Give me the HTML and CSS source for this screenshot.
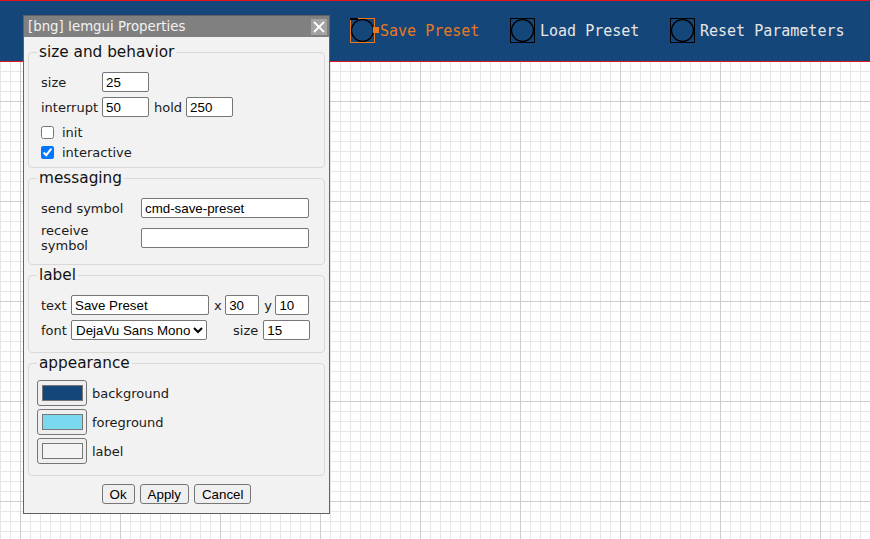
FILE: index.html
```html
<!DOCTYPE html>
<html>
<head>
<meta charset="utf-8">
<title>Iemgui Properties</title>
<link rel="stylesheet" href="styles.css">
</head>
<body>
<header class="bar">
  <div class="bng selected">
    <span class="box"><svg class="ring" width="23" height="23" viewBox="0 0 23 23"><circle cx="11.5" cy="11.5" r="11" fill="none" stroke="#000" stroke-width="1.3"/></svg></span>
    <span class="lbl">Save Preset</span>
  </div>
  <div class="bng">
    <span class="box"><svg class="ring" width="23" height="23" viewBox="0 0 23 23"><circle cx="11.5" cy="11.5" r="11" fill="none" stroke="#000" stroke-width="1.3"/></svg></span>
    <span class="lbl">Load Preset</span>
  </div>
  <div class="bng">
    <span class="box"><svg class="ring" width="23" height="23" viewBox="0 0 23 23"><circle cx="11.5" cy="11.5" r="11" fill="none" stroke="#000" stroke-width="1.3"/></svg></span>
    <span class="lbl">Reset Parameters</span>
  </div>
</header>

<div class="dialog">
  <div class="titlebar">
    <span class="title">[bng] Iemgui Properties</span>
    <span class="close"><svg width="16" height="16" viewBox="0 0 16 16"><path d="M3 3 L13 13 M13 3 L3 13" stroke="#fff" stroke-width="1.8" fill="none"/></svg></span>
  </div>
  <div class="body">
    <fieldset class="fs fs1">
      <legend>size and behavior</legend>
      <div class="row"><span class="lab w61">size</span><input class="in w47" type="text" value="25"></div>
      <div class="row"><span class="lab w61">interrupt</span><input class="in w47" type="text" value="50"><span class="lab hold">hold</span><input class="in w47" type="text" value="250"></div>
      <label class="chk"><input type="checkbox"><span>init</span></label>
      <label class="chk"><input type="checkbox" checked><span>interactive</span></label>
    </fieldset>

    <fieldset class="fs fs2">
      <legend>messaging</legend>
      <div class="row"><span class="lab w100">send symbol</span><input class="in w168" type="text" value="cmd-save-preset"></div>
      <div class="row tall"><span class="lab w100 two">receive<br>symbol</span><input class="in w168" type="text" value=""></div>
    </fieldset>

    <fieldset class="fs fs3">
      <legend>label</legend>
      <div class="row"><span class="lab w30">text</span><input class="in w138" type="text" value="Save Preset"><span class="lab xy">x</span><input class="in w34" type="text" value="30"><span class="lab xy">y</span><input class="in w34" type="text" value="10"></div>
      <div class="row"><span class="lab w30">font</span><select class="sel"><option>DejaVu Sans Mono</option></select><span class="lab fsize">size</span><input class="in w47" type="text" value="15"></div>
    </fieldset>

    <fieldset class="fs fs4">
      <legend>appearance</legend>
      <div class="crow"><button class="cbtn" type="button"><span class="sw sw-bg"></span></button><span class="lab">background</span></div>
      <div class="crow"><button class="cbtn" type="button"><span class="sw sw-fg"></span></button><span class="lab">foreground</span></div>
      <div class="crow"><button class="cbtn" type="button"><span class="sw sw-lb"></span></button><span class="lab">label</span></div>
    </fieldset>

    <div class="actions">
      <button class="btn" type="button">Ok</button>
      <button class="btn" type="button">Apply</button>
      <button class="btn" type="button">Cancel</button>
    </div>
  </div>
</div>
</body>
</html>
```

FILE: styles.css
```css
* { box-sizing: border-box; }
html, body { margin: 0; height: 100%; }
body {
  position: relative;
  overflow: hidden;
  font-family: "DejaVu Sans", sans-serif;
  background-color: #fff;
  background-image:
    linear-gradient(to right, #cdcdcd 1px, transparent 1px),
    linear-gradient(to bottom, #cdcdcd 1px, transparent 1px),
    linear-gradient(to right, #e6e6e6 1px, transparent 1px),
    linear-gradient(to bottom, #e6e6e6 1px, transparent 1px);
  background-size: 100px 100px, 100px 100px, 10px 10px, 10px 10px;
  background-position: 20px 0, 0 1px, 0 0, 0 1px;
}

/* header bar with bang objects */
.bar {
  height: 62px;
  background: #154679;
  border-top: 1px solid #e3141c;
  border-bottom: 1px solid #e3141c;
  display: flex;
  padding: 17px 0 0 350px;
}
.bng {
  flex: 0 0 160px;
  display: flex;
  align-items: center;
  height: 25px;
}
.box {
  position: relative;
  width: 25px;
  height: 25px;
  border: 1px solid #000;
  flex: 0 0 auto;
}
.ring { display: block; }
.lbl {
  font-family: "DejaVu Sans Mono", monospace;
  font-size: 15px;
  color: #e6e6e6;
  margin-left: 5px;
  white-space: nowrap;
}
.selected .box { border-color: #e8791f; }
.selected .lbl { color: #e8791f; }
.selected .box::before {
  content: "";
  position: absolute;
  left: -1px;
  top: -1px;
  width: 8px;
  height: 2px;
  background: #000;
}
.selected .box::after {
  content: "";
  position: absolute;
  left: 22px;
  top: 8px;
  width: 6px;
  height: 6px;
  background: #e8791f;
}

/* dialog */
.dialog {
  position: absolute;
  left: 23px;
  top: 15px;
  width: 307px;
  height: 499px;
  border: 1px solid #626262;
  background: #f2f2f2;
  color: #1a1a1a;
}
.titlebar {
  height: 21px;
  background: #808080;
  color: #f2f2f2;
  font-size: 13.33px;
  display: flex;
  align-items: center;
  justify-content: space-between;
  padding: 0 2px 0 4px;
}
.close {
  width: 16px;
  height: 16px;
  background: #a3a3a3;
  display: block;
}
.close svg { display: block; }
.body { padding: 6px 4px 0; }

.fs {
  border: 1px solid #d9d9d9;
  border-radius: 4px;
  margin: 0;
  min-width: 0;
  padding: 11px 11px 5px 12px;
}
.fs + .fs { margin-top: 1px; }
.fs legend {
  font-size: 15.3px;
  line-height: 18px;
  padding: 0 2px;
  margin-left: -4px;
  color: #111;
}
.fs2 { padding-bottom: 11px; }
.fs3 { padding-bottom: 12px; }
.fs4 { padding: 8px 11px 11px 12px; }

.row {
  display: flex;
  align-items: center;
  height: 20px;
  font-size: 13px;
}
.row + .row { margin-top: 5px; }
.row.tall { height: 30px; }
.lab { font-size: 13px; white-space: nowrap; flex: 0 0 auto; }
.w61 { width: 61px; }
.w100 { width: 100px; }
.w30 { width: 30px; }
.two { line-height: 15px; white-space: normal; }
.hold { margin: 0 4px 0 5px; }
.xy { margin: 0 3.5px 0 5px; }
.fsize { margin: 0 5px 0 26px; }

.in {
  height: 20px;
  margin: 0;
  padding: 1px 3px;
  border: 1px solid #767676;
  border-radius: 2px;
  background: #fff;
  color: #000;
  font-family: "Liberation Sans", Arial, sans-serif;
  font-size: 13.33px;
  flex: 0 0 auto;
}
.w47 { width: 47px; }
.w168 { width: 168px; }
.w138 { width: 138px; }
.w34 { width: 34px; }
.sel {
  width: 136px;
  height: 20px;
  margin: 0;
  border: 1px solid #767676;
  border-radius: 2px;
  background: #fff;
  color: #000;
  font-family: "Liberation Sans", Arial, sans-serif;
  font-size: 13.33px;
  flex: 0 0 auto;
}

.chk {
  display: flex;
  align-items: center;
  height: 20px;
  gap: 8px;
  font-size: 13px;
}
.row + .chk { margin-top: 5px; }
.chk input { margin: 0; width: 13px; height: 13px; }

.crow {
  display: flex;
  align-items: center;
  height: 26px;
  gap: 5px;
}
.crow + .crow { margin-top: 3px; }
.cbtn {
  width: 50px;
  height: 26px;
  margin: 0 0 0 -4px;
  padding: 0;
  border: 1px solid #767676;
  border-radius: 3px;
  background: #efefef;
  display: flex;
  align-items: center;
  justify-content: center;
}
.sw {
  display: block;
  width: 41px;
  height: 16px;
  border: 1px solid #777;
}
.sw-bg { background: #154679; }
.sw-fg { background: #7ad9ee; }
.sw-lb { background: #f4f4f4; }

.actions {
  display: flex;
  justify-content: center;
  gap: 5px;
  margin-top: 8px;
}
.btn {
  height: 20px;
  margin: 0;
  padding: 0 7px;
  border: 1px solid #767676;
  border-radius: 3px;
  background: #efefef;
  color: #000;
  font-family: "Liberation Sans", Arial, sans-serif;
  font-size: 13.33px;
}
```
